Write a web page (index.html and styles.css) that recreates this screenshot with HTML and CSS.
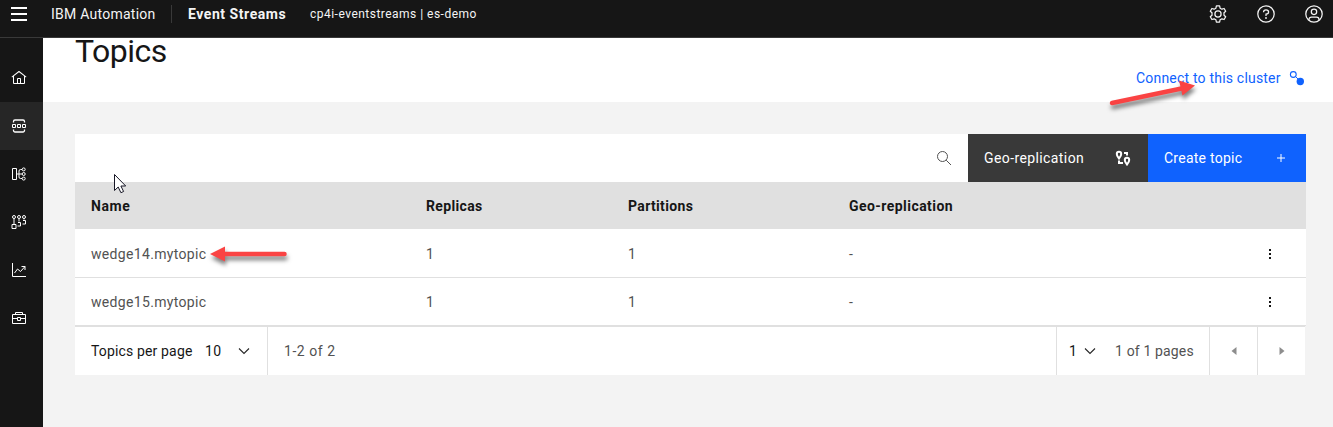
FILE: index.html
```
<!DOCTYPE html>
<html lang="en">
<head>
<meta charset="utf-8">
<title>Event Streams - Topics</title>
<link rel="stylesheet" href="styles.css">
</head>
<body>
<header class="header">
  <svg class="menu" width="16" height="14" viewBox="0 0 16 14"><path d="M0 1h16M0 7h16M0 13h16" stroke="#fff" stroke-width="2"/></svg>
  <span class="brand">IBM Automation</span>
  <span class="divider"></span>
  <span class="product">Event Streams</span>
  <span class="instance">cp4i-eventstreams | es-demo</span>
  <div class="tools">
    <svg width="20" height="20" viewBox="0 0 20 20" fill="none" stroke="#f4f4f4" stroke-width="1.25" stroke-linejoin="round"><circle cx="10" cy="10" r="3.1"/><path d="M8.4 1.900h3.200l.5 2.300 1.800 1 2.200-.7 1.600 2.700-1.700 1.600v2.400l1.700 1.600-1.600 2.700-2.200-.7-1.800 1-.5 2.300H8.400l-.5-2.300-1.800-1-2.200.7-1.600-2.700L4 11.200V8.800L2.300 7.200l1.600-2.700 2.200.7 1.800-1z"/></svg>
    <svg width="20" height="20" viewBox="0 0 20 20" fill="none" stroke="#f4f4f4" stroke-width="1.25"><circle cx="10" cy="10" r="8.200"/><path d="M7.500 8.200c0-1.500 1-2.400 2.500-2.400s2.600.9 2.600 2.200-1 2.100-2.600 2.200v1.700"/><circle cx="10" cy="14" r=".9" fill="#f4f4f4" stroke="none"/></svg>
    <svg width="20" height="20" viewBox="0 0 20 20" fill="none" stroke="#f4f4f4" stroke-width="1.25"><circle cx="10" cy="10" r="8.200"/><circle cx="10" cy="7.800" r="2.700"/><path d="M5 16.200v-.7a2.500 2.500 0 0 1 2.500-2.500h5a2.500 2.500 0 0 1 2.500 2.500v.7"/></svg>
  </div>
</header>
<div class="shell">
  <nav class="sidebar">
    <a class="nav"><svg width="16" height="16" viewBox="0 0 32 32" fill="#fff"><path d="M16.612 2.214a1.010 1.010 0 0 0-1.243 0L1 13.419l1.243 1.572L4 13.621V26a2 2 0 0 0 2 2h20a2 2 0 0 0 2-2V13.630L29.757 15 31 13.428ZM18 26h-4v-8h4Zm2 0v-8a2 2 0 0 0-2-2h-4a2 2 0 0 0-2 2v8H6V12.062l10-7.790 10 7.800V26Z"/></svg></a>
    <a class="nav active"><svg width="16" height="16" viewBox="0 0 16 16" fill="none" stroke="#fff"><path d="M2.500 4.500v-1a1.500 1.500 0 0 1 1.500-1.500h8a1.500 1.500 0 0 1 1.500 1.500v1M2.500 11.500v1A1.500 1.500 0 0 0 4 14h8a1.500 1.500 0 0 0 1.500-1.500v-1" stroke-width="1.300"/><path d="M1.500 6.500h3v3h-3zM6.500 6.500h3v3h-3zM11.500 6.500h3v3h-3z"/></svg></a>
    <a class="nav"><svg width="16" height="16" viewBox="0 0 16 16" fill="none" stroke="#fff"><path d="M1.500 2.500h4v11h-4zM5.500 8H11M11 3.500H9.500A1.500 1.500 0 0 0 8 5v6a1.500 1.500 0 0 0 1.500 1.500H11"/><circle cx="12.700" cy="3.400" r="1.500"/><circle cx="12.700" cy="8" r="1.500"/><circle cx="12.700" cy="12.600" r="1.500"/></svg></a>
    <a class="nav"><svg width="16" height="16" viewBox="0 0 16 16" fill="none" stroke="#fff"><circle cx="3" cy="3" r="1.500"/><circle cx="8" cy="3" r="1.500"/><circle cx="13" cy="3" r="1.500"/><path d="M3 4.500v6M1 10.500h4v4H1zM8 4.500v3M7 8.500h2.500v3.500H6.500M13 4.500v1M12 6.500h2.500v3.500H11.500"/></svg></a>
    <a class="nav"><svg width="16" height="16" viewBox="0 0 16 16" fill="none" stroke="#fff"><path d="M1.500 1v13.500H15M3.500 11l3-4 3 2.500 4.500-5M10.500 4.500H14V8"/></svg></a>
    <a class="nav"><svg width="16" height="16" viewBox="0 0 16 16" fill="none" stroke="#fff"><path d="M1.500 4.500h13v9h-13zM4.500 4.500v-2h7v2M1.500 8.500h5M9.500 8.500h5M6.500 7.500h3v3h-3z"/></svg></a>
  </nav>
  <main class="main">
    <section class="heading">
      <h1 class="title">Topics</h1>
      <a class="connect"><span class="connect-text">Connect to this cluster</span><svg width="16" height="16" viewBox="0 0 16 16"><circle cx="4.300" cy="4.500" r="2.900" fill="none" stroke="#0f62fe" stroke-width="1.100"/><path d="M6.500 6.500l3 3" stroke="#0f62fe"/><circle cx="11.300" cy="11.500" r="3.700" fill="#0f62fe"/></svg></a>
    </section>
    <section class="content">
      <div class="toolbar">
        <div class="search"><svg width="16" height="16" viewBox="0 0 16 16" fill="none" stroke="#525252"><circle cx="6.500" cy="6.500" r="5"/><path d="M10.200 10.200l4.800 4.800"/></svg></div>
        <button class="btn dark"><span>Geo-replication</span><svg width="16" height="16" viewBox="0 0 16 16" fill="none" stroke="#fff" stroke-width="2"><path d="M4 8.500C2.900 6.900 1.800 5.700 1.800 3.900a2.200 2.200 0 0 1 4.400 0C6.200 5.700 5.100 6.900 4 8.500zM12 14.500c-1.100-1.600-2.200-2.800-2.200-4.600a2.200 2.200 0 0 1 4.400 0c0 1.800-1.100 3-2.200 4.600zM9 3h3v2.500M4 10.500V13h4"/></svg></button>
        <button class="btn blue"><span class="create-text">Create topic</span><svg width="16" height="16" viewBox="0 0 16 16"><path d="M8 4v8M4 8h8" stroke="#fff"/></svg></button>
      </div>
      <div class="row head"><span class="h-name">Name</span><span>Replicas</span><span>Partitions</span><span class="h-geo">Geo-replication</span></div>
      <div class="row"><span class="topic">wedge14.mytopic</span><span>1</span><span>1</span><span>-</span><svg width="4" height="12" viewBox="0 0 4 12" fill="#161616"><path d="M1 1h2v2H1zM1 5h2v2H1zM1 9h2v2H1z"/></svg></div>
      <div class="row last"><span class="topic">wedge15.mytopic</span><span>1</span><span>1</span><span>-</span><svg width="4" height="12" viewBox="0 0 4 12" fill="#161616"><path d="M1 1h2v2H1zM1 5h2v2H1zM1 9h2v2H1z"/></svg></div>
      <div class="pagination">
        <div class="page-size"><span class="per-page">Topics per page</span><span class="size">10</span><svg width="12" height="8" viewBox="0 0 12 8"><path d="M1 1.500l5 5 5-5" fill="none" stroke="#262626" stroke-width="1.100"/></svg></div>
        <span class="range">1-2 of 2</span>
        <div class="page-pick"><span class="page">1</span><svg width="12" height="8" viewBox="0 0 12 8"><path d="M1 1.500l5 5 5-5" fill="none" stroke="#262626" stroke-width="1.100"/></svg><span class="pages">1 of 1 pages</span></div>
        <div class="step"><svg width="6" height="8" viewBox="0 0 6 8"><path d="M5.500 0v8L.5 4z" fill="#8d8d8d"/></svg></div>
        <div class="step"><svg width="6" height="8" viewBox="0 0 6 8"><path d="M.5 0v8l5-4z" fill="#8d8d8d"/></svg></div>
      </div>
    </section>
  </main>
</div>
<svg class="annotations" width="1333" height="427" viewBox="0 0 1333 427">
  <g class="arrow"><path d="M1112 103L1184 88" stroke="#fa4343" stroke-width="4.500" stroke-linecap="round"/><path d="M1195 85.500l-16-5 3.500 15z" fill="#fa4343"/></g>
  <g class="arrow"><path d="M284.500 254H223" stroke="#fa4343" stroke-width="4.500" stroke-linecap="round"/><path d="M210 254l15-7.500v15z" fill="#fa4343"/></g>
  <path d="M114.500 174.500v16l3.700-3.500 2.700 5.700 2.700-1.200-2.700-5.500h4.800z" fill="#fff" stroke="#161625"/>
</svg>
</body>
</html>
```
FILE: styles.css
```
* { box-sizing: border-box; }
body {
  margin: 0;
  width: 1333px;
  height: 427px;
  overflow: hidden;
  background: #f3f3f3;
  color: #161616;
  font: 14px/18px Roboto, sans-serif;
  white-space: nowrap;
}
svg { display: block; flex: none; }

.header {
  display: flex;
  align-items: center;
  height: 38px;
  padding: 0 9px 9px 11px;
  border-bottom: 1px solid #393939;
  background: #161616;
  color: #f4f4f4;
}
.brand { width: 120px; margin-left: 24px; letter-spacing: .25px; }
.divider { width: 1px; height: 18px; background: #393939; }
.product { width: 122px; margin-left: 16px; font-weight: 700; letter-spacing: .55px; }
.instance { font-size: 12px; letter-spacing: .48px; }
.tools { display: flex; gap: 28px; margin-left: auto; }

.shell { display: flex; height: 389px; }
.sidebar { width: 43px; padding-top: 16px; background: #161616; }
.nav { display: flex; align-items: center; height: 48px; padding-left: 11px; }
.active { background: #262626; }

.main { flex: 1; }
.heading {
  display: flex;
  justify-content: space-between;
  align-items: flex-start;
  height: 64px;
  padding: 0 28px 0 32px;
  background: #fff;
}
.title { margin: -7px 0 0; font-size: 32px; line-height: 40px; font-weight: 400; letter-spacing: -.5px; }
.connect { display: flex; align-items: center; gap: 8px; margin-top: 31px; color: #0f62fe; }
.connect-text { width: 145px; letter-spacing: .2px; }

.content { padding: 32px 27px 0 32px; }
.toolbar { display: flex; height: 48px; }
.search { display: flex; flex: 1; align-items: center; justify-content: flex-end; padding-right: 16px; background: #fff; }
.btn {
  display: flex;
  align-items: center;
  justify-content: space-between;
  padding: 0 17px 0 16px;
  border: 0;
  color: #fff;
  font: inherit;
  letter-spacing: .4px;
}
.dark { width: 180px; background: #393939; }
.blue { width: 158px; background: #0f62fe; }
.create-text { letter-spacing: .25px; }

.row {
  display: grid;
  grid-template-columns: 335px 202px 221px 419px 4px;
  align-items: center;
  height: 49px;
  padding: 1px 0 0 16px;
  border-bottom: 1px solid #e0e0e0;
  background: #fff;
  color: #525252;
}
.head { height: 47px; padding-top: 0; border: 0; background: #e0e0e0; color: #161616; font-weight: 700; letter-spacing: .35px; }
.h-name { letter-spacing: .55px; }
.h-geo { letter-spacing: .45px; }
.last { height: 48px; padding-top: 0; }
.topic { letter-spacing: .33px; }

.pagination { display: flex; width: 1230px; height: 49px; border-top: 1px solid #e0e0e0; background: #fff; }
.page-size { display: flex; align-items: center; width: 193px; padding-left: 16px; border-right: 1px solid #e0e0e0; letter-spacing: .3px; }
.per-page { width: 114px; letter-spacing: .15px; }
.size { width: 33px; }
.range { flex: 1; padding-left: 16px; line-height: 48px; color: #525252; letter-spacing: .55px; }
.page-pick { display: flex; align-items: center; width: 153px; padding-left: 12px; border-left: 1px solid #e0e0e0; }
.page { width: 15px; }
.pages { margin-left: 19px; color: #525252; letter-spacing: .15px; }
.step { display: flex; align-items: center; justify-content: center; width: 48px; border-left: 1px solid #e0e0e0; }

.annotations { position: absolute; top: 0; left: 0; pointer-events: none; }
.arrow { filter: drop-shadow(1px 4px 2px rgba(0, 0, 0, .5)); }
```
